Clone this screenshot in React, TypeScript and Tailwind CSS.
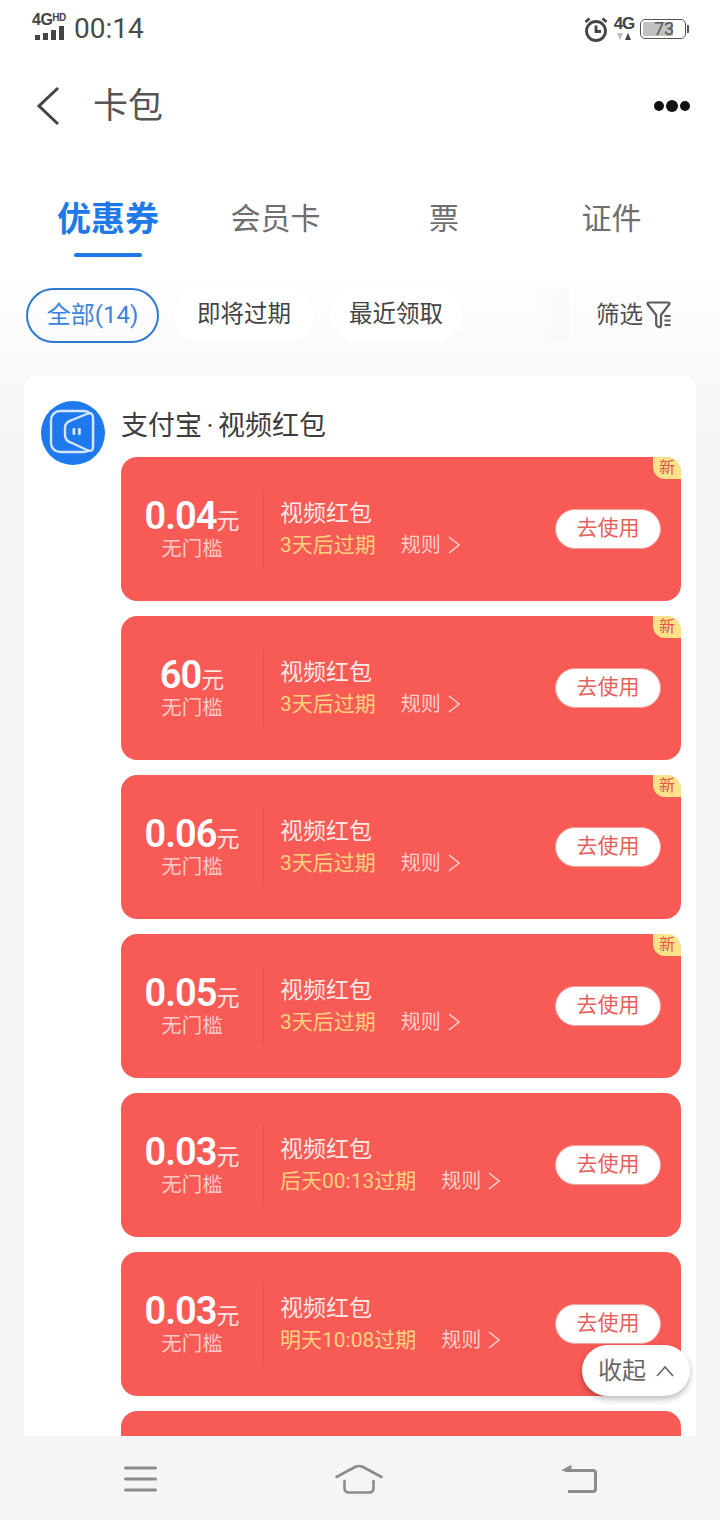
import React from "react";

const cjk = "font-['Roboto','Noto_Sans_CJK_SC',sans-serif]";

const coupons = [
  { v: "0.04", e: "3天后过期", n: true },
  { v: "60", e: "3天后过期", n: true },
  { v: "0.06", e: "3天后过期", n: true },
  { v: "0.05", e: "3天后过期", n: true },
  { v: "0.03", e: "后天00:13过期", n: false },
  { v: "0.03", e: "明天10:08过期", n: false },
];

function Coupon({ v, e, n }: { v: string; e: string; n: boolean }) {
  return (
    <div className="relative h-[144px] shrink-0 rounded-[16px] bg-[#f85a55] flex items-center text-white">
      {n && (
        <div className="absolute right-0 top-0 w-[28px] h-[22px] bg-[#fde28a] rounded-tr-[14px] rounded-bl-[12px] flex items-center justify-center text-[16px] leading-none text-[#e9524a]">
          新
        </div>
      )}
      <div className="w-[142px] shrink-0 flex flex-col items-center">
        <div className="flex items-baseline h-[40px] leading-[40px]">
          <span className="text-[38px] font-semibold tracking-[-1px]">{v}</span>
          <span className="text-[23px] leading-[36px] text-[#ffe3e1]">元</span>
        </div>
        <div className="text-[20.5px] leading-[26px] text-[#fdc9c6]">无门槛</div>
      </div>
      <div className="w-px h-[78px] bg-[#e8504b]" />
      <div className="ml-[16px] flex-1 flex flex-col">
        <div className="text-[23px] leading-[30px] text-[#ffe9e7]">视频红包</div>
        <div className="flex items-center text-[21px] leading-[30px] mt-[1px]">
          <span className="text-[#ffd27f]">{e}</span>
          <span className="ml-[25px] text-[20px] text-[#fdd0cc]">规则</span>
          <svg width="14" height="20" viewBox="0 0 14 20" className="ml-[6px]" fill="none" stroke="#fdd0cc" strokeWidth="1.6">
            <path d="M2 2l10 8-10 8" />
          </svg>
        </div>
      </div>
      <div className="mr-[20px] w-[106px] h-[40px] rounded-full bg-white border border-[#f2a19d] flex items-center justify-center text-[21px] text-[#e5625c]">
        去使用
      </div>
    </div>
  );
}

export default function App() {
  return (
    <div className={`${cjk} relative w-[720px] h-[1520px] overflow-hidden flex flex-col bg-gradient-to-b from-white from-[18%] to-[#f5f5f5] to-[29%]`}>
      <div className="h-[370px] shrink-0 flex flex-col">
        <div className="h-[56px] shrink-0 flex items-center justify-between pl-[32px] pr-[34px] pt-[1px]">
          <div className="flex items-center">
            <div className="w-[34px] h-[26px] flex flex-col mt-[-3px]">
              <div className="font-['Liberation_Sans'] font-bold text-[#444] text-[16px] leading-[12px] tracking-[-0.5px] whitespace-nowrap">
                4G<span className="text-[10px] align-top relative top-[-2px]">HD</span>
              </div>
              <svg width="30" height="14" viewBox="0 0 30 14" fill="#444" className="ml-[3px]">
                <rect x="0" y="9" width="5" height="5" />
                <rect x="8" y="7" width="5" height="7" />
                <rect x="16" y="4" width="5" height="10" />
                <rect x="24" y="0" width="5" height="14" />
              </svg>
            </div>
            <span className="text-[28px] leading-none text-[#4a4a4a] font-['Roboto'] ml-[8px]">00:14</span>
          </div>
          <div className="flex items-center">
            <svg width="26" height="26" viewBox="0 0 26 26" fill="none" stroke="#444" strokeWidth="2.800">
              <circle cx="13" cy="15" r="9.500" />
              <path d="M13 9.500V15.500H18" />
              <path d="M2.500 6L6.500 2.500M23.500 6L19.500 2.500" />
            </svg>
            <div className="w-[20px] ml-[5px] flex flex-col items-center">
              <span className="font-['Liberation_Sans'] font-bold text-[17px] leading-[15px] text-[#444] tracking-[-1px]">4G</span>
              <svg width="16" height="9" viewBox="0 0 16 9" className="mt-[1px]">
                <path d="M1 1h6L4 8z" fill="#bbb" />
                <path d="M9 8h6L12 1z" fill="#444" />
              </svg>
            </div>
            <div className="relative ml-[6px] w-[46px] h-[20px] border border-[#555] rounded-[5px] flex items-center p-[2px]">
              <div className="w-[30px] h-[14px] bg-[#c2c2c2] rounded-[1px]" />
              <span className="absolute left-[13px] top-0 text-[18px] leading-[18px] text-[#555]">73</span>
              <div className="absolute right-[-4px] top-[5px] w-[2px] h-[8px] bg-[#555] rounded-r-[1px]" />
            </div>
          </div>
        </div>
        <div className="h-[100px] shrink-0 flex items-center pl-[36px] pr-[30px]">
          <svg width="24" height="40" viewBox="0 0 24 40" fill="none" stroke="#444" strokeWidth="3">
            <path d="M22 2L3 20l19 18" />
          </svg>
          <span className="ml-[33px] text-[35px] leading-none text-[#555]">卡包</span>
          <div className="ml-auto flex items-center gap-[2px]">
            <span className="w-[10px] h-[10px] rounded-full bg-[#111]" />
            <span className="w-[12px] h-[12px] rounded-full bg-[#111]" />
            <span className="w-[10px] h-[10px] rounded-full bg-[#111]" />
          </div>
        </div>
        <div className="h-[132px] shrink-0 grid grid-cols-[216px_120px_216px_120px]">
          <div className="flex flex-col items-center pt-[40px]">
            <span className="text-[34px] leading-[46px] font-bold text-[#2079e8]">优惠券</span>
            <div className="w-[68px] h-[4px] rounded-full bg-[#2079e8] mt-[11px]" />
          </div>
          <div className="flex justify-center pt-[40px] text-[30px] leading-[46px] text-[#6e6e6e] ml-[-1px] whitespace-nowrap">会员卡</div>
          <div className="flex justify-center pt-[40px] text-[30px] leading-[46px] text-[#6e6e6e]">票</div>
          <div className="flex justify-center pt-[40px] text-[30px] leading-[46px] text-[#6e6e6e] ml-[-1px] whitespace-nowrap">证件</div>
        </div>
        <div className="flex items-center pl-[26px] h-[54px] shrink-0 gap-[15px] text-[23.5px] text-[#444]">
          <div className="w-[133px] h-[55px] rounded-full border-2 border-[#3079d0] flex items-center justify-center text-[24px] text-[#3a84dc]">
            全部(14)
          </div>
          <div className="w-[140px] h-[54px] rounded-full bg-white flex items-center justify-center">即将过期</div>
          <div className="w-[132px] h-[54px] rounded-full bg-white flex items-center justify-center ml-[1px]">最近领取</div>
          <div className="ml-auto h-[54px] flex items-center">
            <div className="w-[41px] h-[54px] bg-gradient-to-r from-transparent to-[#f9f9f9]" />
            <span className="ml-[27px] mt-[2px] text-[#4d4d4d]">筛选</span>
            <svg width="26" height="28" viewBox="0 0 26 28" fill="none" stroke="#5a5a5a" strokeWidth="2.200" className="ml-[3px] mr-[48px]">
              <path d="M3 1.500h19c1.500 0 2 1 1 2.200L15 14v10.500c0 1-1 1.800-2 1.500l-1.500-.6c-.8-.3-1.300-1-1.300-1.900V14L2 3.700C1 2.500 1.500 1.500 3 1.500z" strokeLinejoin="round" />
              <path d="M18.500 15h6M18.500 19.500h6M18.500 24h6" strokeWidth="1.800" />
            </svg>
          </div>
        </div>
      </div>
      <div className="flex-1 min-h-0 mx-[24px] mt-[6px] bg-white rounded-t-[14px] overflow-hidden flex flex-col pl-[17px] pr-[15px] pt-[25px]">
        <div className="flex items-start h-[56px] shrink-0">
          <svg width="64" height="64" viewBox="0 0 64 64" className="shrink-0">
            <circle cx="32" cy="32" r="32" fill="#1e79ee" />
            <rect x="10" y="10" width="42" height="41" rx="9" fill="none" stroke="#d5e6fb" strokeWidth="2.400" />
            <path d="M31 19L47 12.500Q52 11 52 17V46Q52 51 47 49.500L31 42Q24 40 24 34V27Q24 21 31 19z" fill="#1e79ee" stroke="#d5e6fb" strokeWidth="2.400" strokeLinejoin="round" />
            <rect x="31.500" y="27" width="2.800" height="7" rx="1.200" fill="#d5e6fb" />
            <rect x="37" y="27" width="2.800" height="7" rx="1.200" fill="#d5e6fb" />
          </svg>
          <span className="ml-[16px] mt-[5px] text-[27px] leading-[40px] text-[#3c3c3c]">
            支付宝<span className="mx-[4.500px]">·</span>视频红包
          </span>
        </div>
        <div className="flex flex-col gap-[15px] ml-[80px]">
          {coupons.map((c, i) => (
            <Coupon key={i} {...c} />
          ))}
          <div className="h-[144px] shrink-0 rounded-[16px] bg-[#f85a55]" />
        </div>
      </div>
      <div className="h-[84px] shrink-0 bg-[#f5f5f5] flex items-center justify-between pl-[124px] pr-[123px] pt-[1px]">
        <svg width="33" height="26" viewBox="0 0 33 26" fill="none" stroke="#8c8c8c" strokeWidth="3" strokeLinecap="round">
          <path d="M1.500 2h30M1.500 13h30M1.500 24h30" />
        </svg>
        <svg width="48" height="30" viewBox="0 0 48 30" fill="none" stroke="#8c8c8c" strokeWidth="2.600" strokeLinecap="round" strokeLinejoin="round">
          <path d="M1.500 13L20 3c2.500-1.300 5.500-1.300 8 0l18.500 10" />
          <path d="M9.500 17v7c0 3 1.500 4.500 4.500 4.500h20c3 0 4.500-1.500 4.500-4.500v-7" />
        </svg>
        <svg width="36" height="30" viewBox="0 0 36 30" fill="none" stroke="#8c8c8c" strokeWidth="3" strokeLinejoin="round">
          <path d="M7 27.500h25c1.500 0 2.500-1 2.500-2.500V9c0-1.500-1-2.500-2.500-2.500H4" />
          <path d="M1 6.500L10 1.500v5z" fill="#8c8c8c" strokeWidth="1" />
        </svg>
      </div>
      <div className="absolute left-[582px] top-[1345px] w-[108px] h-[51px] rounded-full bg-white shadow-[0_3px_6px_rgba(0,0,0,0.28)] flex items-center pl-[16px] text-[24px] text-[#666]">
        收起
        <svg width="20" height="12" viewBox="0 0 20 12" fill="none" stroke="#666" strokeWidth="1.600" className="ml-[9px]">
          <path d="M2 11l8-9 8 9" />
        </svg>
      </div>
    </div>
  );
}
